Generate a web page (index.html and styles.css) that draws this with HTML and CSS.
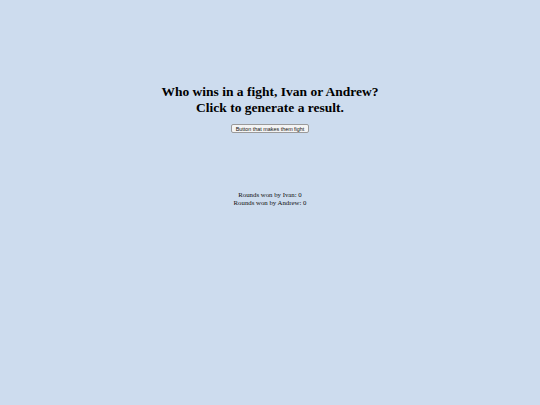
FILE: index.html
```html
<!DOCTYPE html>
<html lang="en">
<head>
<meta charset="utf-8">
<title>Fight</title>
<link rel="stylesheet" href="styles.css">
</head>
<body>
<main class="page">
  <h1 class="title">Who wins in a fight, Ivan or Andrew?<br>Click to generate a result.</h1>
  <button class="fight-btn" type="button">Button that makes them fight</button>
  <p class="result"></p>
  <div class="scores">
    <div>Rounds won by Ivan: 0</div>
    <div>Rounds won by Andrew: 0</div>
  </div>
</main>
</body>
</html>
```
FILE: styles.css
```css
html, body {
  margin: 0;
  padding: 0;
  background: #cddcee;
}

body {
  font-family: "Liberation Serif", "Times New Roman", serif;
  color: #000;
  min-height: 405px;
}

.page {
  display: flex;
  flex-direction: column;
  align-items: center;
  text-align: center;
  padding-top: 84px;
}

.title {
  margin: 0;
  font-size: 13.5px;
  line-height: 16px;
  font-weight: bold;
}

.fight-btn {
  margin-top: 8px;
  font-family: "Liberation Sans", Arial, sans-serif;
  font-size: 5.4px;
  line-height: 6px;
  padding: 1px 4px;
  height: 9px;
  background: #f4f4f4;
  border: 1px solid #9a9a9a;
  border-radius: 2px;
  color: #111;
}

.result {
  margin: 0;
  height: 58px;
}

.scores {
  font-size: 6.8px;
  line-height: 8px;
  color: #111;
}
```
